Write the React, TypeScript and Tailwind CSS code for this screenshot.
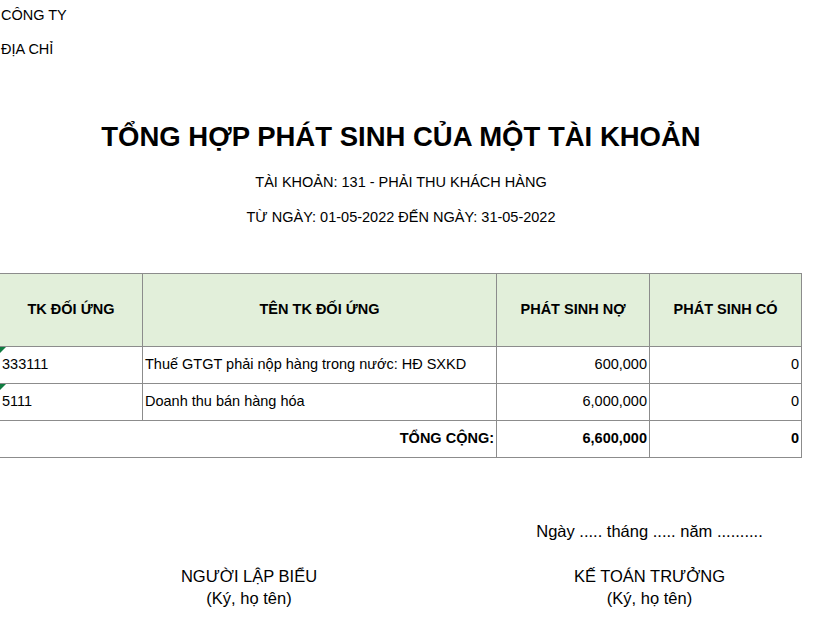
export default function App() {
  const f = { fontFamily: '"Liberation Sans", Arial, sans-serif' };
  const b = "border-[#8c8c8c]";
  return (
    <div style={f} className="w-[826px] h-[619px] bg-white text-black text-[14.5px] overflow-hidden">
      <div className="h-[31px] flex items-center pl-[1px]">CÔNG TY</div>
      <div className="h-[37px] flex items-center pl-[1px]">ĐỊA CHỈ</div>
      <div className="w-[802px]">
        <div className="h-[48px]" />
        <div className="h-[42px] flex items-center justify-center text-[27.5px] font-bold">TỔNG HỢP PHÁT SINH CỦA MỘT TÀI KHOẢN</div>
        <div className="h-[7px]" />
        <div className="h-[35px] flex items-center justify-center">TÀI KHOẢN: 131 - PHẢI THU KHÁCH HÀNG</div>
        <div className="h-[35px] flex items-center justify-center">TỪ NGÀY: 01-05-2022 ĐẾN NGÀY: 31-05-2022</div>
        <div className="h-[38px]" />
        <div className={`border-t border-r ${b}`}>
          <div className={`flex h-[73px] bg-[#e2efda] font-bold border-b ${b}`}>
            <div className={`w-[143px] flex items-center justify-center border-r ${b}`}>TK ĐỐI ỨNG</div>
            <div className={`w-[354px] flex items-center justify-center border-r ${b}`}>TÊN TK ĐỐI ỨNG</div>
            <div className={`w-[153px] flex items-center justify-center border-r ${b}`}>PHÁT SINH NỢ</div>
            <div className="flex-1 flex items-center justify-center">PHÁT SINH CÓ</div>
          </div>
          {[["333111", "Thuế GTGT phải nộp hàng trong nước: HĐ SXKD", "600,000"], ["5111", "Doanh thu bán hàng hóa", "6,000,000"]].map((r) => (
            <div key={r[0]} className={`flex h-[37px] border-b ${b}`}>
              <div className={`relative w-[143px] flex items-center pl-[2px] border-r ${b}`}>
                <div className="absolute left-0 top-0 w-0 h-0 border-t-[6px] border-r-[6px] border-t-[#107c41] border-r-transparent" />
                {r[0]}
              </div>
              <div className={`w-[354px] flex items-center pl-[2px] border-r ${b}`}>{r[1]}</div>
              <div className={`w-[153px] flex items-center justify-end pr-[2px] border-r ${b}`}>{r[2]}</div>
              <div className="flex-1 flex items-center justify-end pr-[2px]">0</div>
            </div>
          ))}
          <div className={`flex h-[37px] border-b ${b} font-bold`}>
            <div className={`w-[497px] flex items-center justify-end pr-[2px] border-r ${b}`}>TỔNG CỘNG:</div>
            <div className={`w-[153px] flex items-center justify-end pr-[2px] border-r ${b}`}>6,600,000</div>
            <div className="flex-1 flex items-center justify-end pr-[2px]">0</div>
          </div>
        </div>
        <div className="h-[55px]" />
        <div className="flex">
          <div className="w-[497px]" />
          <div className="flex-1 h-[37px] flex items-center justify-center text-[16.5px]">Ngày ..... tháng ..... năm ..........</div>
        </div>
        <div className="h-[15px]" />
        <div className="flex text-[16.5px]">
          <div className="w-[497px] flex flex-col items-center pl-[1px]">
            <div className="h-[22px] flex items-center">NGƯỜI LẬP BIỂU</div>
            <div className="h-[22px] flex items-center">(Ký, họ tên)</div>
          </div>
          <div className="flex-1 flex flex-col items-center">
            <div className="h-[22px] flex items-center">KẾ TOÁN TRƯỞNG</div>
            <div className="h-[22px] flex items-center">(Ký, họ tên)</div>
          </div>
        </div>
      </div>
    </div>
  );
}
